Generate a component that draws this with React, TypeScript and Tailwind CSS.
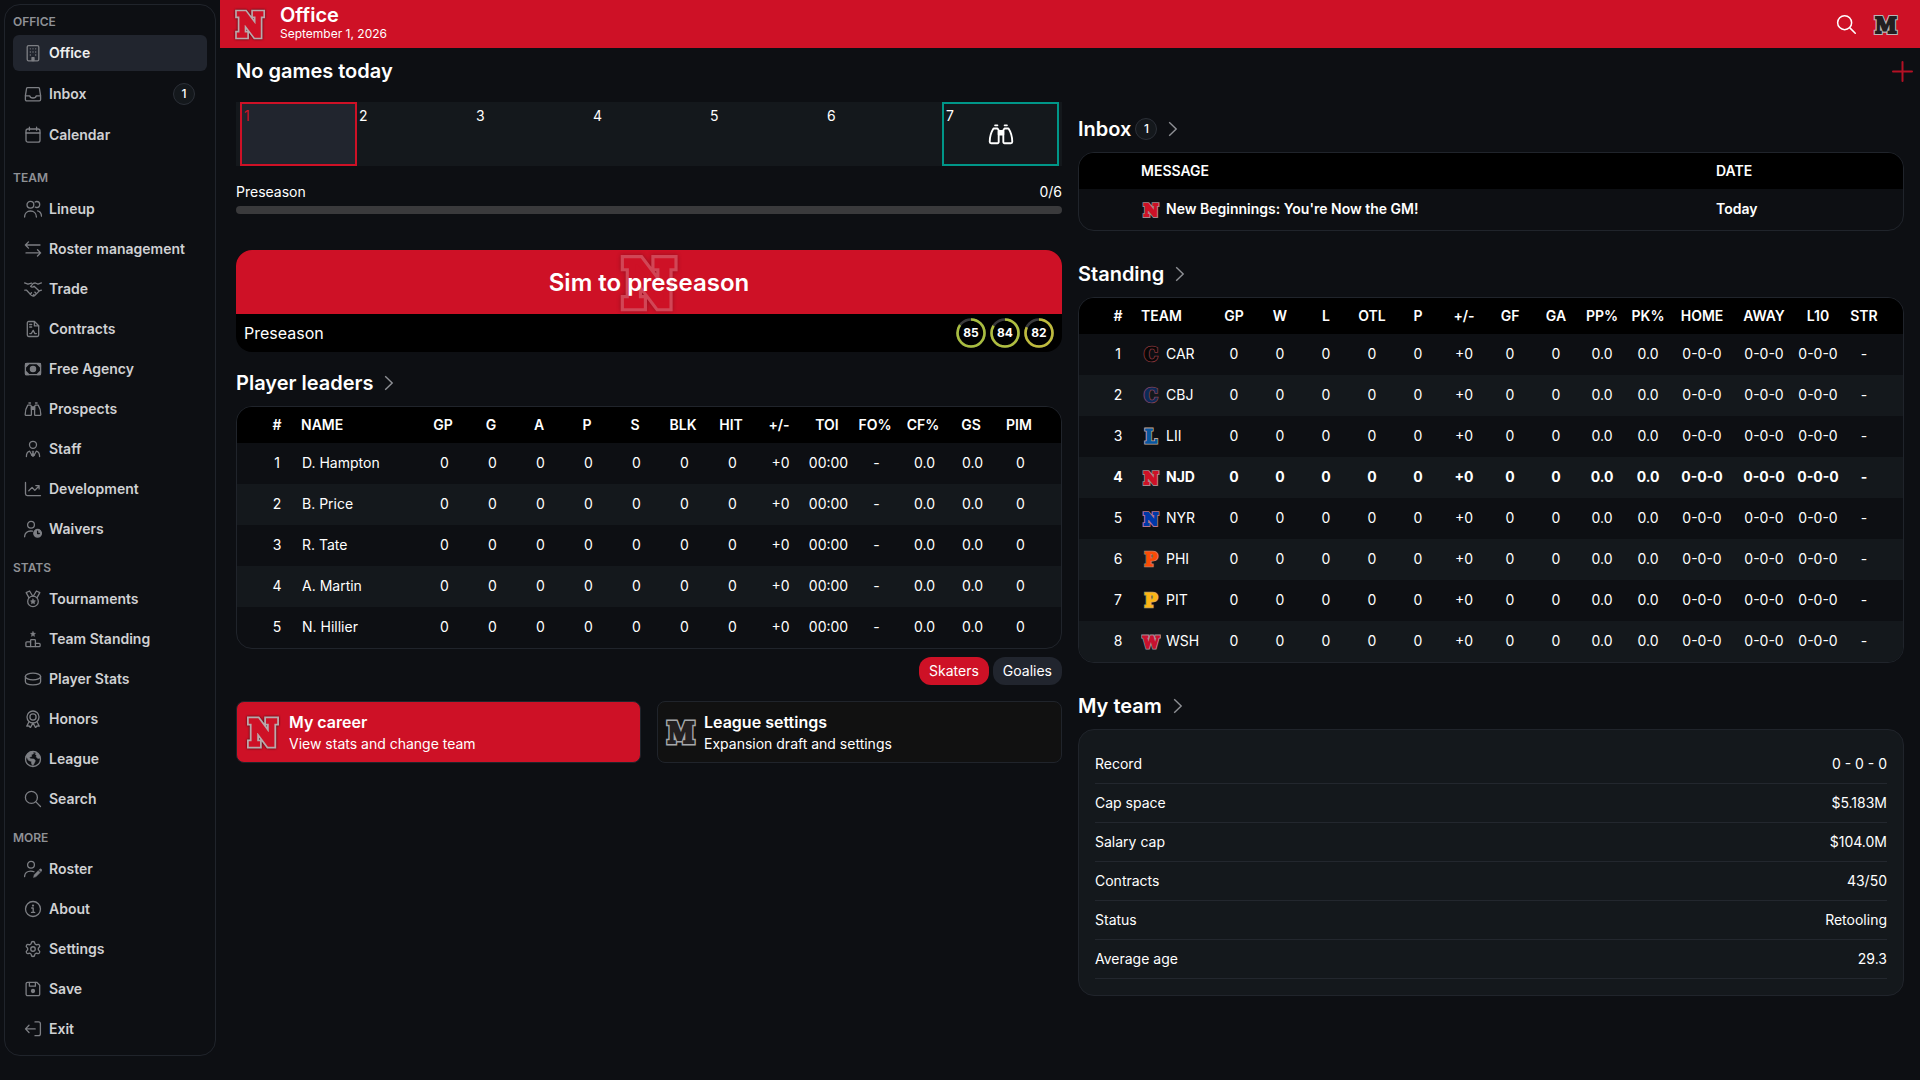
import { useState, type ReactNode } from 'react'
import { Settings } from 'lucide-react'

type LogoProps = {
  letter: string
  fill: string
  line: string
  className?: string
}

// Wide letters need a smaller face, round ones a thinner edge to keep the counter open
const letterShape: Record<string, { size: number; edge: number; body: number }> = {
  C: { size: 31, edge: 4, body: 1.4 },
  L: { size: 31, edge: 4.6, body: 2 },
  P: { size: 31, edge: 4.2, body: 1.8 },
  N: { size: 28, edge: 6, body: 3 },
  M: { size: 27, edge: 5, body: 2.2 },
  W: { size: 26, edge: 4.6, body: 2 },
}

// Team crest: a slab letter with a contrasting edge
const TeamLogo = ({ letter, fill, line, className = '' }: LogoProps) => {
  const { size, edge, body } = letterShape[letter]

  return (
    <svg viewBox="2 0 32 36" className={`shrink-0 ${className}`} aria-hidden="true">
      <g
        fontFamily="'DejaVu Serif Condensed', 'DejaVu Serif', serif"
        fontStretch="condensed"
        fontWeight="700"
        fontSize={size}
        textAnchor="middle"
        strokeLinejoin="miter"
        strokeMiterlimit="2"
      >
        <text x="18" y="29" fill={line} stroke={line} strokeWidth={edge}>{letter}</text>
        <text x="18" y="29" fill={fill} stroke={fill} strokeWidth={body}>{letter}</text>
      </g>
    </svg>
  )
}

const Icon = ({ children, className = 'size-[18px]' }: { children: ReactNode; className?: string }) => (
  <svg
    viewBox="0 0 18 18"
    className={`shrink-0 ${className}`}
    fill="none"
    stroke="currentColor"
    strokeWidth="1.3"
    strokeLinecap="round"
    strokeLinejoin="round"
    aria-hidden="true"
  >
    {children}
  </svg>
)

const SearchShape = () => (
  <>
    <circle cx="7.4" cy="7.4" r="6" />
    <path d="M11.9 11.9l4.6 4.6" />
  </>
)

const BinocularsShape = () => (
  <>
    <path d="M3.8 5.2h2.8l.8 1.2v8.2a.8.8 0 0 1-.8.8H2.2a1 1 0 0 1-1-1c0-3.4.9-6.6 2.6-9.2z" />
    <path d="M14.2 5.2h-2.8l-.8 1.2v8.2a.8.8 0 0 0 .8.8h4.4a1 1 0 0 0 1-1c0-3.4-.9-6.6-2.6-9.2z" />
    <path d="M4.9 3h1.6M11.5 3h1.6" />
    <path d="M7.4 6.8h3.2v2.6H7.4z" fill="currentColor" />
  </>
)

const icons: Record<string, ReactNode> = {
  office: (
    <>
      <rect x="3.2" y="1.6" width="11.6" height="15.2" rx="1.4" />
      <path d="M6.3 4.8h.01M9 4.8h.01M11.7 4.8h.01M6.3 8h.01M9 8h.01M11.7 8h.01M6.3 11h.01M11.7 11h.01" />
      <path d="M8 16.6v-3h2v3z" fill="currentColor" />
    </>
  ),
  inbox: (
    <>
      <path d="M3.6 2.6h10.8a1 1 0 0 1 1 .8l1.2 7.2v4a1.3 1.3 0 0 1-1.3 1.3H2.7a1.3 1.3 0 0 1-1.3-1.3v-4l1.2-7.2a1 1 0 0 1 1-.8z" />
      <path d="M1.5 10.8h4.3c.2 1.4 1.5 2.2 3.2 2.2s3-.8 3.2-2.2h4.3" />
    </>
  ),
  calendar: (
    <>
      <rect x="2" y="3" width="14" height="13.2" rx="2" />
      <path d="M2 7h14M5.4 1.2v3M12.6 1.2v3" />
    </>
  ),
  lineup: (
    <>
      <circle cx="6.4" cy="4.8" r="3.4" />
      <path d="M.6 17c0-3.6 2.5-6 5.9-6s5.9 2.4 5.9 6" />
      <path d="M11.2 2c.4-.3 1-.5 1.5-.5a3 3 0 0 1 0 6c-.5 0-1-.1-1.4-.4M13.6 10.8c2.3.6 3.8 2.6 3.9 5.4" />
    </>
  ),
  roster: <path d="M16 5H1.4M4.5 1.9L1.4 5l3.1 3.1M2 12.9h14.6M13.5 9.8l3.1 3.1-3.1 3.1" />,
  trade: (
    <>
      <path d="M.6 2.9L4 4.1 7.6 3.2M17.4 2.9L14 4.1 11.3 3 9.3 3.4 6.6 6.4c.9 1 2.3.9 3.5-.2l4.8 4.5" />
      <path d="M.8 10.2h1.8l4.5 4.9c1.3 1.3 2.9 1.3 4.1 0l4.1-4.2 2.1-.7" />
      <path d="M6.3 14l1.2-1.2M9 15.6l1-1.2M12.2 13.4l-1.4-1.3" />
    </>
  ),
  contracts: (
    <>
      <path d="M10.5 1.5H4.7a1.4 1.4 0 0 0-1.4 1.4v12.2a1.4 1.4 0 0 0 1.4 1.4h8.6a1.4 1.4 0 0 0 1.4-1.4V5.7z" />
      <path d="M10.4 1.7v4.2h4.2M5.7 4.5h2M5.7 7h2M5.8 13.6h1.4l2-3.2 1.7 3.2h1.5" />
    </>
  ),
  cash: (
    <>
      <rect x="1.4" y="3.5" width="15.2" height="11.2" rx="1.4" />
      <circle cx="9" cy="9" r="2.6" fill="currentColor" />
      <path d="M1.6 3.7h3.2L1.6 7zM16.4 3.7h-3.2L16.4 7zM1.6 14.5h3.2l-3.2-3.2zM16.4 14.5h-3.2l3.2-3.2z" fill="currentColor" />
    </>
  ),
  binoculars: <BinocularsShape />,
  staff: (
    <>
      <circle cx="9" cy="4.8" r="3.5" />
      <path d="M2.4 16.6c0-2.8 1.3-4.8 3.3-5.4l2.2 4M15.6 16.6c0-2.8-1.3-4.8-3.3-5.4l-2.2 4" />
      <path d="M8.3 11.2h1.4l-.3 1.3 1.2 3L9 16.8l-1.6-1.3 1.2-3z" fill="currentColor" strokeWidth=".6" />
    </>
  ),
  development: (
    <>
      <path d="M1.5 2.5v11.3a1.8 1.8 0 0 0 1.8 1.8h13.2" />
      <path d="M4.8 10.7l3.3-3.3 2.7 3 4-4.2M11.8 5.6h3.3v3.3" />
    </>
  ),
  waivers: (
    <>
      <circle cx="7" cy="4.8" r="3.4" />
      <path d="M.6 16.8c0-3.5 2.7-5.8 6.2-5.8.6 0 1.2.1 1.8.2" />
      <circle cx="13.6" cy="13.3" r="3.8" fill="currentColor" />
      <path d="M13.6 11.2v2.3h1.7" stroke="#0d0f13" />
    </>
  ),
  medal: (
    <>
      <circle cx="9" cy="11.4" r="5.3" />
      <path d="M9 9l.8 1.6 1.7.2-1.2 1.2.3 1.7L9 12.9l-1.6.8.3-1.7-1.2-1.2 1.7-.2z" fill="currentColor" strokeWidth=".6" />
      <path d="M4.9 7.6L2.2 2.6 5.6 1l3 5M13.1 7.6l2.7-5L12.4 1l-3 5" />
    </>
  ),
  podium: (
    <>
      <path d="M9 1.4l.8 1.7 1.8.2-1.3 1.3.3 1.8L9 5.6l-1.6.8.3-1.8-1.3-1.3 1.8-.2z" fill="currentColor" strokeWidth=".4" />
      <path d="M6.6 16.6V10.4a.8.8 0 0 1 .8-.8h3.2a.8.8 0 0 1 .8.8v6.2z" />
      <path d="M6.6 11.9H2.8a.9.9 0 0 0-.9.9v2.9c0 .5.4.9.9.9h3.8M11.4 13.4h3.8c.5 0 .9.4.9.9v1.4c0 .5-.4.9-.9.9h-3.8" />
    </>
  ),
  puck: (
    <>
      <ellipse cx="9" cy="6.5" rx="7.6" ry="3.3" />
      <path d="M1.4 6.5v5c0 1.9 3.4 3.3 7.6 3.3s7.6-1.4 7.6-3.3v-5" />
    </>
  ),
  rosette: (
    <>
      <circle cx="9" cy="7" r="6" />
      <circle cx="9" cy="7" r="3.1" />
      <path d="M5 11.8l-2.2 4.3 2.3-.1 1.3 1.6 2.6-4.7 2.6 4.7 1.3-1.6 2.3.1-2.2-4.3" />
    </>
  ),
  globe: (
    <>
      <circle cx="9" cy="9" r="7.5" />
      <path d="M2 6.5C3 3.7 5.6 1.7 8.8 1.5l.9 2.1-2.2 1.2.1 1.7-2.3.8 1.2 1.4 3.6.4 1.3 1.7-1 2.2-1.5 2.6-1.3-1.7-.2-2.3-2.7-1.2z" fill="currentColor" strokeWidth=".5" />
      <path d="M12.3 2.5l3 2.5 1 3-2.3.6-1.8-1.6.3-1.7-1.3-1z" fill="currentColor" strokeWidth=".5" />
    </>
  ),
  search: <SearchShape />,
  edit: (
    <>
      <circle cx="7" cy="4.8" r="3.4" />
      <path d="M.6 16.6c0-3.4 2.6-5.5 6.2-5.5 1.2 0 2.3.2 3.2.7" />
      <path d="M9.6 17.2l.6-2.5 4-4 1.9 1.9-4 4zM15 9.9l.6-.6a1.3 1.3 0 0 1 1.9 1.9l-.6.6z" fill="currentColor" strokeWidth=".5" />
    </>
  ),
  info: (
    <>
      <circle cx="9" cy="9" r="7.5" />
      <path d="M7.7 8h1.5v4.3M7.5 12.4h3.2" />
      <circle cx="9" cy="5.6" r=".5" fill="currentColor" />
    </>
  ),
  save: (
    <>
      <path d="M3.6 2.3h9.2l2.9 2.9v9a1.5 1.5 0 0 1-1.5 1.5H3.6a1.5 1.5 0 0 1-1.5-1.5V3.8a1.5 1.5 0 0 1 1.5-1.5z" />
      <path d="M5.4 2.5v3.7h6V2.5" />
      <circle cx="9" cy="11" r="1.5" fill="currentColor" />
    </>
  ),
  exit: <path d="M11 1.9h3.5A1.9 1.9 0 0 1 16.4 3.8v10a1.9 1.9 0 0 1-1.9 1.9H11M11.2 8.9H1.6M5 5.3L1.5 8.9 5 12.5" />,
}

const sections = [
  {
    title: 'OFFICE',
    items: [
      { icon: 'office', label: 'Office' },
      { icon: 'inbox', label: 'Inbox', badge: '1' },
      { icon: 'calendar', label: 'Calendar' },
    ],
  },
  {
    title: 'TEAM',
    items: [
      { icon: 'lineup', label: 'Lineup' },
      { icon: 'roster', label: 'Roster management' },
      { icon: 'trade', label: 'Trade' },
      { icon: 'contracts', label: 'Contracts' },
      { icon: 'cash', label: 'Free Agency' },
      { icon: 'binoculars', label: 'Prospects' },
      { icon: 'staff', label: 'Staff' },
      { icon: 'development', label: 'Development' },
      { icon: 'waivers', label: 'Waivers' },
    ],
  },
  {
    title: 'STATS',
    items: [
      { icon: 'medal', label: 'Tournaments' },
      { icon: 'podium', label: 'Team Standing' },
      { icon: 'puck', label: 'Player Stats' },
      { icon: 'rosette', label: 'Honors' },
      { icon: 'globe', label: 'League' },
      { icon: 'search', label: 'Search' },
    ],
  },
  {
    title: 'MORE',
    items: [
      { icon: 'edit', label: 'Roster' },
      { icon: 'info', label: 'About' },
      { icon: 'settings', label: 'Settings' },
      { icon: 'save', label: 'Save' },
      { icon: 'exit', label: 'Exit' },
    ],
  },
]

const NavIcon = ({ name }: { name: string }) => {
  if (name === 'settings') return <Settings className="size-[18px] shrink-0" strokeWidth={1.8} />
  return <Icon>{icons[name]}</Icon>
}

const Badge = ({ children }: { children: ReactNode }) => (
  <span className="flex size-[22px] items-center justify-center rounded-full border border-[#2b2f37] bg-[#14181c] text-xs font-medium text-white">
    {children}
  </span>
)

const Sidebar = () => {
  const [active, setActive] = useState('Office')

  return (
    <nav className="m-1 w-[212px] shrink-0 self-start rounded-2xl border border-[#20242b] p-2">
      {sections.map((section, i) => (
        <div key={section.title} className={i === 0 ? 'mb-4' : 'mb-3 last:mb-0'}>
          <h2 className="h-[22px] text-xs leading-[18px] font-semibold text-[#8f9196]">{section.title}</h2>
          <ul className={`flex flex-col ${i === 0 ? 'gap-[5px]' : 'gap-1'}`}>
            {section.items.map((item) => (
              <li key={item.label}>
                <a
                  href="#"
                  onClick={() => setActive(item.label)}
                  className={`flex h-9 items-center gap-[7px] rounded-md pr-3 pl-[11px] text-sm font-semibold ${
                    active === item.label ? 'bg-[#21252e] text-[#f0f0f0]' : 'text-[#d0d1d3]'
                  }`}
                >
                  <span className="text-[#7d7f84]">
                    <NavIcon name={item.icon} />
                  </span>
                  <span className="flex-1">{item.label}</span>
                  {'badge' in item && <Badge>{item.badge}</Badge>}
                </a>
              </li>
            ))}
          </ul>
        </div>
      ))}
    </nav>
  )
}

const SectionTitle = ({ title, badge }: { title: string; badge?: string }) => (
  <a href="#" className="mb-[9px] flex h-7 items-center">
    <h2 className="text-xl font-semibold">{title}</h2>
    {badge && (
      <span className="ml-1">
        <Badge>{badge}</Badge>
      </span>
    )}
    <svg viewBox="0 0 10 16" className="ml-[11px] h-4 w-[10px]" fill="none" stroke="#8f9196" strokeWidth="1.4" aria-hidden="true">
      <path d="M1.2 1.2L8.2 8l-7 6.8" />
    </svg>
  </a>
)

const Ring = ({ value, color }: { value: number; color: string }) => (
  <span className="relative flex size-[30px] items-center justify-center text-xs font-bold text-white">
    <svg viewBox="0 0 30 30" className="absolute inset-0 size-full -rotate-90" fill="none" strokeWidth="2.6" aria-hidden="true">
      <circle cx="15" cy="15" r="13.5" stroke="#3a3a3c" />
      <circle cx="15" cy="15" r="13.5" stroke={color} pathLength="100" strokeDasharray={`${value} 100`} />
    </svg>
    {value}
  </span>
)

const skaterCols = ['GP', 'G', 'A', 'P', 'S', 'BLK', 'HIT', '+/-', 'TOI', 'FO%', 'CF%', 'GS', 'PIM']
const skaterStats = ['0', '0', '0', '0', '0', '0', '0', '+0', '00:00', '-', '0.0', '0.0', '0']
const players = ['D. Hampton', 'B. Price', 'R. Tate', 'A. Martin', 'N. Hillier']

const standingCols = ['GP', 'W', 'L', 'OTL', 'P', '+/-', 'GF', 'GA', 'PP%', 'PK%', 'HOME', 'AWAY', 'L10', 'STR']
const standingStats = ['0', '0', '0', '0', '0', '+0', '0', '0', '0.0', '0.0', '0-0-0', '0-0-0', '0-0-0', '-']
const teams = [
  { name: 'CAR', letter: 'C', fill: '#050505', line: '#87353c' },
  { name: 'CBJ', letter: 'C', fill: '#0b2a57', line: '#83435a' },
  { name: 'LII', letter: 'L', fill: '#0857a0', line: '#c3a596' },
  { name: 'NJD', letter: 'N', fill: '#ce1126', line: '#a5868b' },
  { name: 'NYR', letter: 'N', fill: '#0038a8', line: '#b4758c' },
  { name: 'PHI', letter: 'P', fill: '#fa4b05', line: '#a88372' },
  { name: 'PIT', letter: 'P', fill: '#fcb514', line: '#a89468' },
  { name: 'WSH', letter: 'W', fill: '#c8102e', line: '#a5929c' },
]

const teamInfo = [
  ['Record', '0 - 0 - 0'],
  ['Cap space', '$5.183M'],
  ['Salary cap', '$104.0M'],
  ['Contracts', '43/50'],
  ['Status', 'Retooling'],
  ['Average age', '29.3'],
]

const TableCard = ({ children }: { children: ReactNode }) => (
  <div className="overflow-hidden rounded-2xl border border-[#20242b]">
    <table className="w-full table-fixed text-sm">{children}</table>
  </div>
)

const PlayerLeaders = () => {
  const [tab, setTab] = useState('Skaters')

  return (
    <section className="mt-[17px]">
      <SectionTitle title="Player leaders" />
      <TableCard>
        <colgroup>
          <col className="w-[60px]" />
          <col />
          {skaterCols.map((c) => (
            <col key={c} className="w-12" />
          ))}
          <col className="w-4" />
        </colgroup>
        <thead className="bg-black">
          <tr className="h-9">
            <th className="p-0 pl-5 font-semibold">#</th>
            <th className="p-0 pl-1 text-left font-semibold">NAME</th>
            {skaterCols.map((c) => (
              <th key={c} className="p-0 pr-1 font-semibold">{c}</th>
            ))}
            <th className="p-0" />
          </tr>
        </thead>
        <tbody>
          {players.map((player, i) => (
            <tr key={player} className="h-[41px] even:bg-[#14181c]">
              <td className="p-0 pb-0.5 pl-5 text-center">{i + 1}</td>
              <td className="p-0 pb-0.5 pl-[5px]">{player}</td>
              {skaterStats.map((v, j) => (
                <td key={j} className="p-0 pr-px pb-0.5 text-center">{v}</td>
              ))}
              <td className="p-0" />
            </tr>
          ))}
        </tbody>
      </TableCard>
      <div className="mt-2 flex justify-end gap-1">
        {['Skaters', 'Goalies'].map((t) => (
          <button
            key={t}
            type="button"
            onClick={() => setTab(t)}
            className={`h-7 rounded-xl px-[10px] text-sm ${tab === t ? 'bg-[#ce1126]' : 'bg-[#21252e]'}`}
          >
            {t}
          </button>
        ))}
      </div>
    </section>
  )
}

const Standing = () => (
  <section className="mt-[29px]">
    <SectionTitle title="Standing" />
    <TableCard>
      <colgroup>
        <col className="w-[58px]" />
        <col />
        {standingCols.map((c) => (
          <col key={c} className={c === 'HOME' || c === 'AWAY' ? 'w-[62px]' : 'w-[46px]'} />
        ))}
        <col className="w-4" />
      </colgroup>
      <thead className="bg-black">
        <tr className="h-9">
          <th className="p-0 pl-5 font-semibold">#</th>
          <th className="p-0 pl-1 text-left font-semibold">TEAM</th>
          {standingCols.map((c) => (
            <th key={c} className="p-0 font-semibold">{c}</th>
          ))}
          <th className="p-0" />
        </tr>
      </thead>
      <tbody>
        {teams.map((team, i) => (
          <tr key={team.name} className={`h-[41px] even:bg-[#14181c] ${team.name === 'NJD' ? 'font-bold' : ''}`}>
            <td className="p-0 pb-0.5 pl-5 text-center">{i + 1}</td>
            <td className="p-0 pb-0.5 pl-1">
              <span className="flex items-center gap-[5px]">
                <TeamLogo letter={team.letter} fill={team.fill} line={team.line} className="h-6 w-5" />
                {team.name}
              </span>
            </td>
            {standingStats.map((v, j) => (
              <td key={j} className="p-0 pb-0.5 text-center">{v}</td>
            ))}
            <td className="p-0" />
          </tr>
        ))}
      </tbody>
    </TableCard>
  </section>
)

export default function App() {
  return (
    <div className="flex min-h-screen bg-[#0d0f13] font-['Inter',sans-serif] text-white">
      <Sidebar />

      <div className="min-w-0 flex-1">
        <header className="flex h-12 items-center bg-[#ce1126] pr-[21px] pl-3">
          <TeamLogo letter="N" fill="#ce1126" line="#b9a9ab" className="h-10 w-9 drop-shadow-[0_0_1px_#300a10]" />
          <div className="ml-3 pb-1">
            <h1 className="text-xl leading-6 font-semibold">Office</h1>
            <p className="text-xs leading-[14px]">September 1, 2026</p>
          </div>
          <button type="button" aria-label="Search" className="ml-auto">
            <Icon className="size-[21px]">
              <SearchShape />
            </Icon>
          </button>
          <button type="button" aria-label="League" className="ml-4">
            <TeamLogo letter="M" fill="#231f20" line="#b8b4b5" className="h-[30px] w-[26px]" />
          </button>
        </header>

        <div className="flex h-[46px] items-center pr-[7px] pl-4">
          <h2 className="text-xl font-semibold">No games today</h2>
          <button type="button" aria-label="Add widget" className="ml-auto">
            <svg viewBox="0 0 21 21" className="size-[21px]" stroke="#b41124" strokeWidth="2" strokeLinecap="round" aria-hidden="true">
              <path d="M10.5 1v19M1 10.5h19" />
            </svg>
          </button>
        </div>

        <main className="grid grid-cols-2 gap-4 pr-4 pl-4">
          <div className="min-w-0 pt-2">
            <div className="grid h-16 grid-cols-7 bg-[#14181c] pr-[3px] pl-1 text-sm leading-5">
              <div className="border-2 border-[#ce1126] bg-[#21252e] px-0.5 pt-0.5 text-[#ce1126]">1</div>
              {[2, 3, 4, 5, 6].map((day) => (
                <div key={day} className="px-0.5 pt-1">{day}</div>
              ))}
              <div className="relative border-2 border-[#009688] px-0.5 pt-0.5">
                7
                <span className="absolute inset-0 flex items-center justify-center">
                  <Icon className="size-[26px]">
                    <BinocularsShape />
                  </Icon>
                </span>
              </div>
            </div>

            <div className="mt-4 flex justify-between text-sm">
              <span>Preseason</span>
              <span>0/6</span>
            </div>
            <div className="mt-1 h-2 rounded bg-[#3a3a3c]" />

            <div className="mt-9 overflow-hidden rounded-2xl bg-black">
              <button type="button" className="relative flex h-16 w-full items-center justify-center bg-[#ce1126]">
                <span className="absolute inset-0 flex items-center justify-center opacity-35">
                  <TeamLogo letter="N" fill="#ce1126" line="#d9a9af" className="h-[76px] w-[68px] drop-shadow-[0_0_2px_#300a10]" />
                </span>
                <span className="relative pt-0.5 text-2xl font-semibold">Sim to preseason</span>
              </button>
              <div className="flex h-[38px] items-center justify-between px-2">
                <span>Preseason</span>
                <div className="flex gap-1">
                  <Ring value={85} color="#a8bd3f" />
                  <Ring value={84} color="#afbe3f" />
                  <Ring value={82} color="#bfbb3c" />
                </div>
              </div>
            </div>

            <PlayerLeaders />

            <div className="mt-4 grid grid-cols-2 gap-4">
              <a href="#" className="flex h-[62px] items-center gap-[7px] rounded-lg border border-[#20242b] bg-[#ce1126] px-[7px]">
                <TeamLogo letter="N" fill="#ce1126" line="#b9a9ab" className="h-11 w-[38px] drop-shadow-[0_0_1px_#300a10]" />
                <span>
                  <span className="block leading-6 font-semibold">My career</span>
                  <span className="block text-sm">View stats and change team</span>
                </span>
              </a>
              <a href="#" className="flex h-[62px] items-center gap-[7px] rounded-lg border border-[#20242b] bg-[#111111] px-[7px]">
                <TeamLogo letter="M" fill="#231f20" line="#a5a7aa" className="h-9 w-8" />
                <span>
                  <span className="block leading-6 font-semibold">League settings</span>
                  <span className="block text-sm">Expansion draft and settings</span>
                </span>
              </a>
            </div>
          </div>

          <div className="min-w-0 pt-[21px]">
            <section>
              <SectionTitle title="Inbox" badge="1" />
              <TableCard>
                <colgroup>
                  <col className="w-[58px]" />
                  <col />
                  <col className="w-[191px]" />
                </colgroup>
                <thead className="bg-black">
                  <tr className="h-9 text-left">
                    <th className="p-0" />
                    <th className="p-0 pl-1 font-semibold">MESSAGE</th>
                    <th className="p-0 pl-1 font-semibold">DATE</th>
                  </tr>
                </thead>
                <tbody>
                  <tr className="h-[41px] font-semibold">
                    <td className="p-0" />
                    <td className="p-0 pb-0.5 pl-1">
                      <a href="#" className="flex items-center gap-[5px]">
                        <TeamLogo letter="N" fill="#ce1126" line="#a5868b" className="h-6 w-5" />
                        New Beginnings: You're Now the GM!
                      </a>
                    </td>
                    <td className="p-0 pb-0.5 pl-1">Today</td>
                  </tr>
                </tbody>
              </TableCard>
            </section>

            <Standing />

            <section className="mt-[29px]">
              <SectionTitle title="My team" />
              <dl className="rounded-2xl border border-[#20242b] bg-[#14181c] px-4 pt-[15px] pb-4 text-sm">
                {teamInfo.map(([label, value]) => (
                  <div key={label} className="flex h-[39px] items-center justify-between border-b border-[#23272e]">
                    <dt>{label}</dt>
                    <dd>{value}</dd>
                  </div>
                ))}
              </dl>
            </section>
          </div>
        </main>
      </div>
    </div>
  )
}
